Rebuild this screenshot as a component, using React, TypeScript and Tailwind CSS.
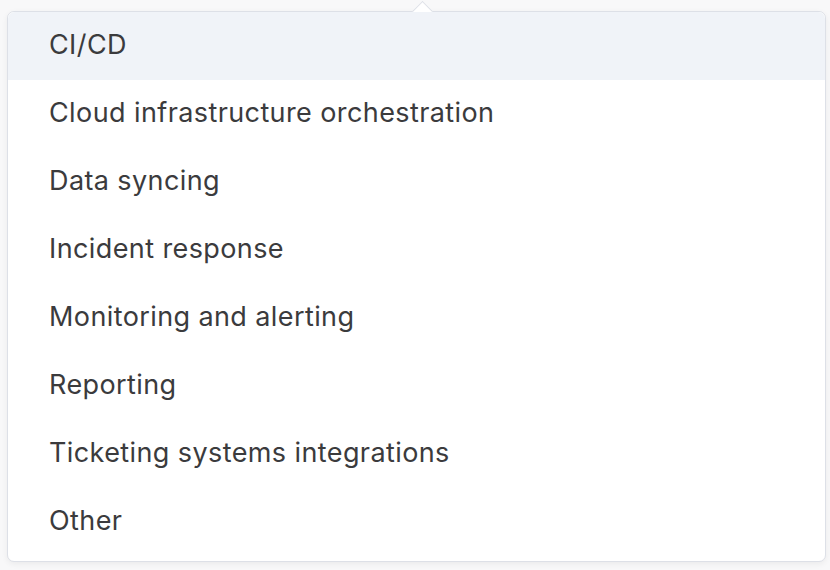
const OPTIONS = [
  'CI/CD',
  'Cloud infrastructure orchestration',
  'Data syncing',
  'Incident response',
  'Monitoring and alerting',
  'Reporting',
  'Ticketing systems integrations',
  'Other',
];

export default function App() {
  return (
    <div
      className="h-[570px] w-[830px] bg-[#f8f8f9] pl-[7px] pt-[11px]"
      style={{ fontFamily: 'Inter, "Noto Sans", sans-serif' }}
    >
      <div className="relative w-[819px] rounded-[7px] border border-[#dde0e7] bg-white pb-[5px] shadow-[0_2px_6px_rgba(0,0,0,0.06)]">
        {/* pointer */}
        <div className="absolute -top-[8px] left-[407px] h-[15px] w-[15px] rotate-45 border-l border-t border-[#dde0e7] bg-white" />
        <ul className="relative overflow-hidden rounded-t-[7px]">
          {OPTIONS.map((o, i) => (
            <li
              key={o}
              className={`flex h-[68px] items-center px-[41px] pb-px text-[27px] tracking-[0.4px] text-[#3b3b3d] ${
                i === 0 ? 'bg-[#f0f3f8]' : ''
              }`}
            >
              {o}
            </li>
          ))}
        </ul>
      </div>
    </div>
  );
}
